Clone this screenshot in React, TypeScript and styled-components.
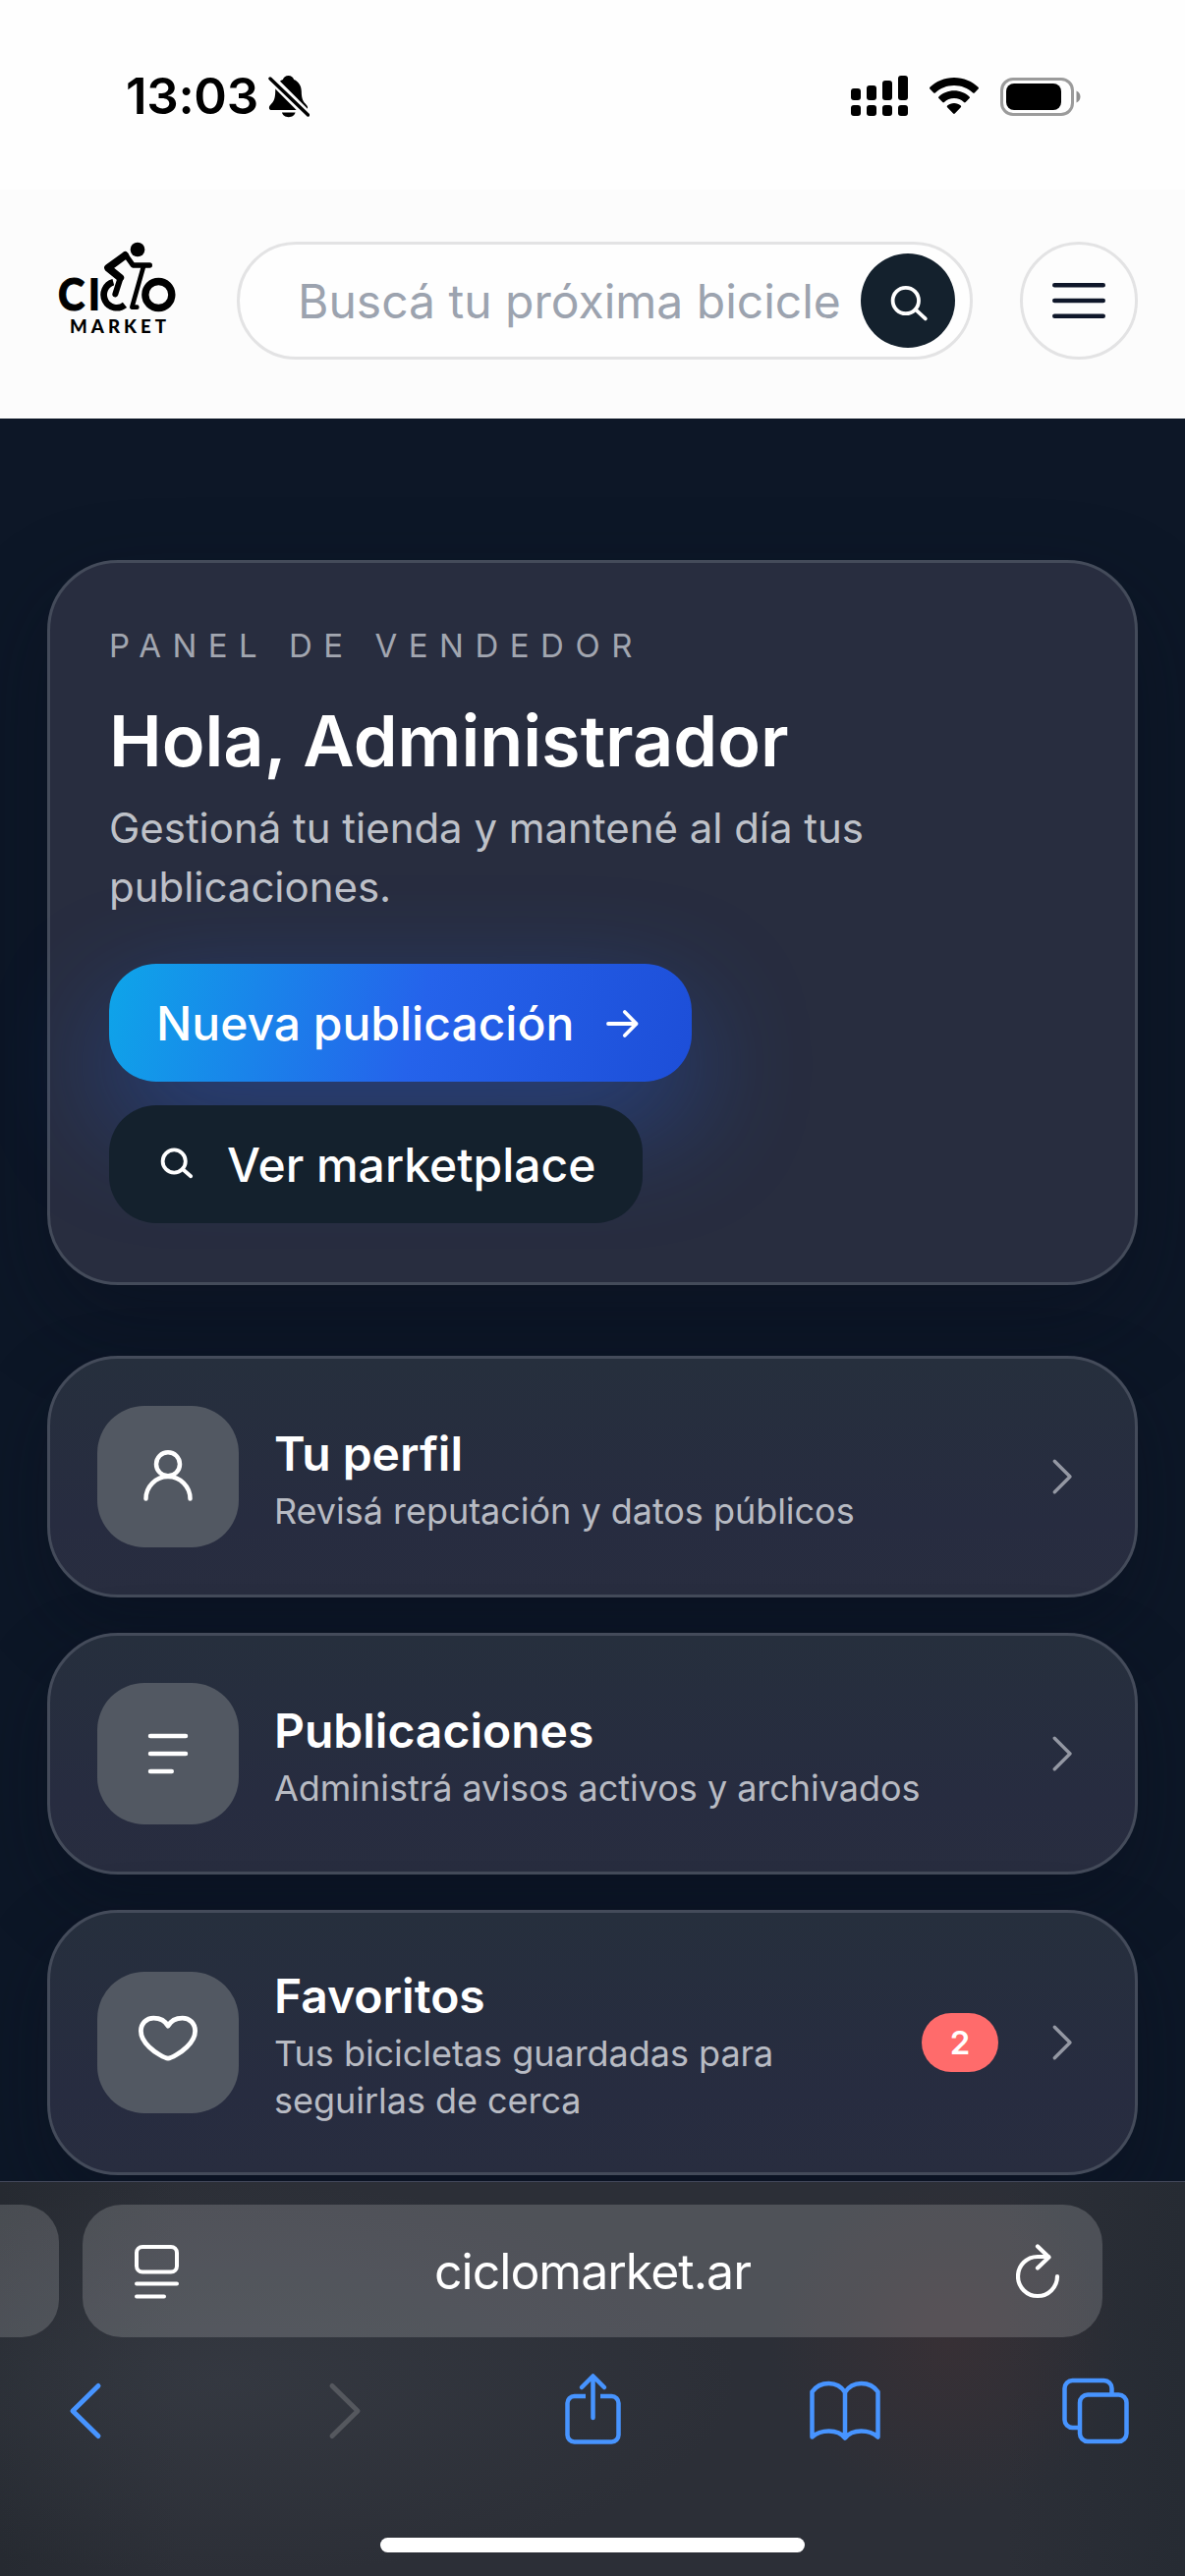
import React from 'react';
import styled, { createGlobalStyle } from 'styled-components';

const GlobalStyle = createGlobalStyle`
  *, *::before, *::after { box-sizing: border-box; }
  html, body { margin: 0; padding: 0; background: #0c1626; }
  body { font-family: Inter, "Liberation Sans", sans-serif; -webkit-font-smoothing: antialiased; }
  svg { display: block; flex: none; }
  button { font: inherit; border: 0; padding: 0; margin: 0; }
  h1, h2, p { margin: 0; }
`;

const Screen = styled.div`
  width: 1206px;
  height: 2622px;
  display: flex;
  flex-direction: column;
  overflow: hidden;
  background: #0d1727;
`;

/* ---------- Status bar ---------- */

const StatusBar = styled.div`
  height: 193px;
  flex: none;
  display: flex;
  justify-content: space-between;
  align-items: flex-start;
  padding: 67px 106px 0 128px;
  background: #fefefe;
  color: #000;
`;

const Clock = styled.div`
  display: flex;
  align-items: center;
  height: 62px;
  gap: 10px;
`;

const Time = styled.span`
  font-size: 51px;
  font-weight: 600;
  line-height: 62px;
  letter-spacing: -0.3px;
`;

const StatusIcons = styled.div`
  display: flex;
  align-items: center;
  height: 62px;
  gap: 22px;
`;

/* ---------- Site header ---------- */

const Header = styled.header`
  height: 233px;
  flex: none;
  display: flex;
  align-items: center;
  gap: 48px;
  padding: 0 48px 7px 40px;
  background: #fcfcfc;
`;

const SearchField = styled.div`
  flex: 1;
  min-width: 0;
  height: 120px;
  display: flex;
  align-items: center;
  justify-content: space-between;
  padding: 0 15px 0 59px;
  border: 3px solid #e3e3e4;
  border-radius: 60px;
  background: #fefefe;
`;

const Placeholder = styled.span`
  padding-top: 1px;
  font-size: 48px;
  line-height: 72px;
  color: #9ca3af;
  white-space: nowrap;
`;

const RoundButton = styled.button<{ $size: number; $outlined?: boolean }>`
  flex: none;
  width: ${(p) => p.$size}px;
  height: ${(p) => p.$size}px;
  display: flex;
  align-items: center;
  justify-content: center;
  border-radius: 50%;
  border: ${(p) => (p.$outlined ? '3px solid #e3e3e4' : '0')};
  background: ${(p) => (p.$outlined ? '#fdfdfd' : '#14212d')};
  color: ${(p) => (p.$outlined ? '#0f172a' : '#fff')};
`;

/* ---------- Page content ---------- */

const Content = styled.main`
  flex: 1;
  min-height: 0;
  overflow: hidden;
  display: flex;
  flex-direction: column;
  gap: 72px;
  padding: 144px 48px 0;
`;

const HeroCard = styled.section`
  flex: none;
  display: flex;
  flex-direction: column;
  align-items: flex-start;
  padding: 60px;
  border: 3px solid #444b5a;
  border-radius: 72px;
  background: #282d3f;
  box-shadow: 0 36px 90px rgba(10, 14, 30, 0.4);
`;

const Kicker = styled.p`
  font-size: 33px;
  line-height: 48px;
  letter-spacing: 11.5px;
  text-transform: uppercase;
  color: #a2a6b0;
`;

const Greeting = styled.h1`
  margin-top: 25px;
  font-size: 72px;
  line-height: 96px;
  font-weight: 600;
  color: #fff;
`;

const Intro = styled.p`
  margin-top: 11px;
  font-size: 42px;
  line-height: 60px;
  letter-spacing: -0.03px;
  color: #bec1c8;
`;

const Actions = styled.div`
  margin-top: 48px;
  display: flex;
  flex-direction: column;
  align-items: flex-start;
  gap: 24px;
`;

const ActionButton = styled.button<{ $primary?: boolean }>`
  height: 120px;
  display: flex;
  align-items: center;
  gap: 24px;
  padding: 1px 48px 0;
  border-radius: 48px;
  font-size: 48px;
  font-weight: 500;
  line-height: 72px;
  white-space: nowrap;
  color: #fff;
  background: ${(p) =>
    p.$primary ? 'linear-gradient(105deg, #0ea5e9 0%, #2563eb 53%, #1d4ed8 100%)' : '#14212d'};
  box-shadow: ${(p) => (p.$primary ? '0 42px 120px rgba(37, 99, 235, 0.4)' : 'none')};
`;

const MenuList = styled.nav`
  display: flex;
  flex-direction: column;
  gap: 36px;
`;

const MenuCard = styled.a`
  flex: none;
  display: flex;
  align-items: center;
  gap: 36px;
  padding: 48px;
  border: 3px solid #444b5a;
  border-radius: 72px;
  background: linear-gradient(180deg, #262f3d, #272c40 70%, #282d3f);
  box-shadow: 0 30px 72px rgba(10, 14, 30, 0.35);
`;

const IconTile = styled.span`
  flex: none;
  width: 144px;
  height: 144px;
  display: flex;
  align-items: center;
  justify-content: center;
  border-radius: 48px;
  background: #525862;
  color: #fff;
`;

const MenuText = styled.div`
  flex: 1;
  min-width: 0;
`;

const MenuTitle = styled.h2`
  padding-top: 1px;
  font-size: 48px;
  line-height: 71px;
  font-weight: 600;
  color: #fff;
`;

const MenuHint = styled.p`
  margin: -1px 0 1px;
  font-size: 36px;
  line-height: 48px;
  letter-spacing: -0.03px;
  color: #b8bbc3;
`;

const Badge = styled.span`
  flex: none;
  width: 78px;
  height: 60px;
  display: flex;
  align-items: center;
  justify-content: center;
  margin-right: 1px;
  border-radius: 30px;
  background: #ff6b6b;
  color: #fff;
  font-size: 33px;
  font-weight: 600;
`;

/* ---------- Browser bar ---------- */

const BrowserBar = styled.footer`
  height: 402px;
  flex: none;
  display: flex;
  flex-direction: column;
  align-items: center;
  border-top: 1px solid #42475a;
  background:
    radial-gradient(ellipse 180px 170px at 965px 165px, rgba(84, 50, 48, 0.28), rgba(84, 50, 48, 0)),
    radial-gradient(ellipse 520px 200px at 230px 200px, rgba(60, 65, 74, 0.5), rgba(60, 65, 74, 0)),
    linear-gradient(90deg, #262a31, #2c2f37 15%, #2c2f37 85%, #262b33);
`;

const Tabs = styled.div`
  align-self: stretch;
  display: flex;
  gap: 24px;
  padding: 23px 84px 0 0;
`;

const NeighbourTab = styled.div`
  width: 60px;
  height: 135px;
  border-radius: 0 38px 38px 0;
  background: rgba(255, 255, 255, 0.16);
`;

const AddressBar = styled.div`
  flex: 1;
  height: 135px;
  display: flex;
  align-items: center;
  padding: 0 42px 0 52px;
  border-radius: 40px;
  background: rgba(255, 255, 255, 0.17);
  color: #fff;
`;

const Domain = styled.span`
  flex: 1;
  padding-right: 10px;
  text-align: center;
  font-size: 50px;
  line-height: 64px;
  letter-spacing: -1px;
`;

const Toolbar = styled.div`
  align-self: stretch;
  display: grid;
  grid-template-columns: 264px 243px 250px 257px 70px;
  align-items: center;
  height: 76px;
  margin-top: 36px;
  padding-left: 67px;
  color: #4794ff;
`;

const HomeIndicator = styled.div`
  width: 432px;
  height: 15px;
  margin-top: 92px;
  border-radius: 8px;
  background: #fff;
`;

/* ---------- Drawings ---------- */

type StrokeProps = {
  size: number;
  width?: number;
  color?: string;
  children: React.ReactNode;
};

const StrokeIcon = ({ size, width = 1.5, color = 'currentColor', children }: StrokeProps) => (
  <svg
    width={size}
    height={size}
    viewBox="0 0 24 24"
    fill="none"
    stroke={color}
    strokeWidth={width}
    strokeLinecap="round"
    strokeLinejoin="round"
  >
    {children}
  </svg>
);

const UserIcon = () => (
  <StrokeIcon size={72}>
    <circle cx="12" cy="7.75" r="4" />
    <path d="M4.5 19.5a7.5 7.5 0 0 1 15 0" />
  </StrokeIcon>
);

const ListIcon = () => (
  <StrokeIcon size={72}>
    <path d="M6 6h12M6 12h12M6 18h7.25" />
  </StrokeIcon>
);

const HeartIcon = () => (
  <StrokeIcon size={72} width={1.6}>
    <path d="M12 17.4C11 17.300 7.600 15.500 5.600 13.500C3.700 11.700 2.800 9.900 2.800 8.100C2.800 5.500 4.700 3.700 7.100 3.700C9.300 3.700 11.100 4.700 12 6.400C12.900 4.700 14.700 3.700 16.900 3.700C19.300 3.700 21.200 5.500 21.200 8.100C21.200 9.900 20.300 11.700 18.400 13.500C16.400 15.500 13 17.300 12 17.4Z" />
  </StrokeIcon>
);

const ChevronIcon = () => (
  <StrokeIcon size={54} color="#9498a3">
    <path d="M9 5l7 7-7 7" />
  </StrokeIcon>
);

const FieldSearchIcon = () => (
  <StrokeIcon size={48} width={1.9}>
    <circle cx="10.9" cy="12" r="6.6" />
    <path d="M15.9 16.6l5 4.6" />
  </StrokeIcon>
);

const ButtonSearchIcon = () => (
  <StrokeIcon size={48} width={1.9}>
    <circle cx="9.1" cy="10" r="5.8" />
    <path d="M13.400 14l4.200 3.600" />
  </StrokeIcon>
);

const BellOffIcon = () => (
  <svg width="42" height="44" viewBox="0 0 42 44">
    <path
      d="M20.5 1c-3 0-5 1.7-5.6 4C10 7 7.300 11.500 7.200 17c-.1 6-1 9.500-3.700 12.300C1.500 31.400.9 32.300.9 33.700c0 1.400 1 2.300 2.700 2.300h33.800c1.700 0 2.700-.9 2.700-2.300 0-1.400-.6-2.300-2.600-4.400-2.700-2.800-3.600-6.300-3.700-12.300C33.700 11.500 31 7 26.100 5c-.6-2.300-2.600-4-5.600-4z"
      fill="#000"
    />
    <path d="M14 38.500h13.500c-.5 2.700-3.200 4.700-6.750 4.700s-6.250-2-6.750-4.700z" fill="#000" />
    <path d="M1 2l42 42" stroke="#fefefe" strokeWidth="9" />
    <path d="M2 4l38.500 37" stroke="#000" strokeWidth="3.400" strokeLinecap="round" />
  </svg>
);

const SIGNAL_BARS = [
  { x: 0, top: 13 },
  { x: 16, top: 10 },
  { x: 32, top: 5 },
  { x: 48, top: 0 },
];

const SignalIcon = () => (
  <svg width="58" height="42" viewBox="0 0 58 42">
    {SIGNAL_BARS.map((b) => (
      <g key={b.x}>
        <rect x={b.x} y={b.top} width="10" height={25 - b.top} rx="3" />
        <rect x={b.x} y="30" width="10" height="11" rx="3" />
      </g>
    ))}
  </svg>
);

const WifiIcon = () => (
  <svg width="50" height="38" viewBox="0 0 50 38">
    <path d="M25 0C34.700 0 43.500 3.800 49.600 9.800c.5.500.5 1.200 0 1.700l-3.800 3.900c-.5.500-1.200.5-1.700 0C39 10.600 32.300 7.900 25 7.900S11 10.600 5.900 15.400c-.5.500-1.200.5-1.700 0L.4 11.500c-.5-.5-.5-1.200 0-1.700C6.500 3.800 15.300 0 25 0z" />
    <path d="M25 13.200c6 0 11.500 2.300 15.600 6.200.5.500.5 1.200 0 1.700l-3.900 3.900c-.5.500-1.200.5-1.700 0-2.600-2.400-6.100-3.900-10-3.900s-7.400 1.500-10 3.900c-.5.500-1.200.5-1.700 0l-3.900-3.900c-.5-.5-.5-1.200 0-1.700 4.100-3.900 9.600-6.200 15.600-6.200z" />
    <path d="M25 26c2.600 0 5 1 6.800 2.600.5.500.5 1.200 0 1.700l-6 6.200c-.5.500-1.200.5-1.700 0l-6-6.200c-.5-.5-.5-1.200 0-1.700C20 27 22.400 26 25 26z" />
  </svg>
);

const BatteryIcon = () => (
  <svg width="82" height="39" viewBox="0 0 82 39">
    <rect x="1.500" y="1.500" width="72" height="36" rx="11.500" fill="none" stroke="#9b9b9b" strokeWidth="3" />
    <rect x="6" y="6" width="56" height="27" rx="8" fill="#000" />
    <path d="M77.500 13.500c2.400 1 4 3.300 4 6s-1.600 5-4 6z" fill="#8f8f8f" />
  </svg>
);

const LogoText = styled.text`
  font-family: Lato, Inter, sans-serif;
  font-weight: 900;
`;

/* The second C and the O are the wheels of the bicycle. */
const Logo = () => (
  <svg width="153" height="152" viewBox="0 0 459 456" aria-label="Ciclo Market">
    <g fill="#000">
      <LogoText x="57" y="258" fontSize="137" textLength="82" lengthAdjust="spacingAndGlyphs" stroke="#000" strokeWidth="3">C</LogoText>
      <LogoText x="147" y="258" fontSize="137">I</LogoText>
      <LogoText x="93" y="326" fontSize="56" textLength="294">MARKET</LogoText>
      <circle cx="300" cy="72" r="22" />
    </g>
    <g fill="none" stroke="#000" strokeLinecap="round" strokeLinejoin="round">
      <circle cx="364" cy="210" r="40.500" strokeWidth="22" />
      <path d="M261 241A39.500 39.500 0 1 1 226 172" strokeWidth="20" strokeLinecap="butt" />
      <path d="M248 166L233 208" stroke="#fdfdfd" strokeWidth="28" />
      <path d="M262 90L210 128L247 158" strokeWidth="23" />
      <path d="M248 158L232 208" strokeWidth="18" />
      <path d="M262 86L286 120H337" strokeWidth="16" />
      <path d="M318 124L283 248H298" strokeWidth="14" />
    </g>
  </svg>
);

const ReaderIcon = () => (
  <svg width="46" height="56" viewBox="0 0 46 56" fill="none" stroke="#fff" strokeWidth="4" strokeLinecap="round">
    <rect x="3" y="3" width="41" height="25.500" rx="6" />
    <path d="M3 40.500h41M3 53.500h28" />
  </svg>
);

const ReloadIcon = () => (
  <svg width="46" height="56" viewBox="0 0 46 56" fill="none" stroke="#fff" strokeWidth="4.200" strokeLinecap="round" strokeLinejoin="round">
    <path d="M42 33a20 20 0 1 1-20-20H33" />
    <path d="M22 2.500L33.500 13.500L22 24.500" />
  </svg>
);

const BackIcon = () => (
  <svg width="38" height="76" viewBox="0 0 38 76" fill="none" stroke="currentColor" strokeWidth="5" strokeLinecap="round" strokeLinejoin="round">
    <path d="M33 13.500L7 39L33 64.500" />
  </svg>
);

const ForwardIcon = () => (
  <svg width="38" height="76" viewBox="0 0 38 76" fill="none" stroke="#55585e" strokeWidth="5" strokeLinecap="round" strokeLinejoin="round">
    <path d="M7 13.500L33 39L7 64.500" />
  </svg>
);

const ShareIcon = () => (
  <svg width="58" height="76" viewBox="0 0 58 76" fill="none" stroke="currentColor" strokeWidth="4.500" strokeLinecap="round" strokeLinejoin="round">
    <path d="M22 24H10.500a7 7 0 0 0-7 7v32.500a7 7 0 0 0 7 7h38a7 7 0 0 0 7-7V31a7 7 0 0 0-7-7H37" strokeLinecap="butt" />
    <path d="M29.500 46V4M18 15L29.500 3.500L41 15" />
  </svg>
);

const BookIcon = () => (
  <svg width="72" height="76" viewBox="0 0 72 76" fill="none" stroke="currentColor" strokeWidth="4.500" strokeLinejoin="round" strokeLinecap="round">
    <path d="M36 20C32.500 14.500 26.500 11 19.500 11C12 11 6 14.500 2.500 19.500V65.500C7 61.500 13 59.500 19.500 59.500C26.500 59.500 32.500 62 36 66.500C39.500 62 45.500 59.500 52.500 59.500C59 59.500 65 61.500 69.500 65.500V19.500C66 14.500 60 11 52.500 11C45.500 11 39.500 14.500 36 20ZM36 20V66" />
  </svg>
);

const TabsIcon = () => (
  <svg width="70" height="76" viewBox="0 0 70 76" fill="none" stroke="currentColor" strokeWidth="4.500" strokeLinejoin="round">
    <rect x="18" y="22.500" width="47.500" height="47.500" rx="8" />
    <path d="M50.500 22.500V16a8 8 0 0 0-8-8H10.500a8 8 0 0 0-8 8v32a8 8 0 0 0 8 8H18" />
  </svg>
);

/* ---------- Screen ---------- */

type MenuItem = { title: string; hint: string; icon: React.ReactNode; count?: number };

const MENU: MenuItem[] = [
  { title: 'Tu perfil', hint: 'Revisá reputación y datos públicos', icon: <UserIcon /> },
  { title: 'Publicaciones', hint: 'Administrá avisos activos y archivados', icon: <ListIcon /> },
  { title: 'Favoritos', hint: 'Tus bicicletas guardadas para seguirlas de cerca', icon: <HeartIcon />, count: 2 },
];

export default function App() {
  return (
    <>
      <GlobalStyle />
      <Screen>
        <StatusBar>
          <Clock>
            <Time>13:03</Time>
            <BellOffIcon />
          </Clock>
          <StatusIcons>
            <SignalIcon />
            <WifiIcon />
            <BatteryIcon />
          </StatusIcons>
        </StatusBar>

        <Header>
          <Logo />
          <SearchField>
            <Placeholder>Buscá tu próxima bicicle</Placeholder>
            <RoundButton $size={96} aria-label="Buscar">
              <FieldSearchIcon />
            </RoundButton>
          </SearchField>
          <RoundButton $size={120} $outlined aria-label="Menú">
            <StrokeIcon size={72}>
              <path d="M3.750 6.750h16.500M3.750 12h16.500M3.750 17.250h16.500" />
            </StrokeIcon>
          </RoundButton>
        </Header>

        <Content>
          <HeroCard>
            <Kicker>Panel de vendedor</Kicker>
            <Greeting>Hola, Administrador</Greeting>
            <Intro>
              Gestioná tu tienda y mantené al día tus
              <br />
              publicaciones.
            </Intro>
            <Actions>
              <ActionButton $primary>
                Nueva publicación
                <StrokeIcon size={48} width={1.9}>
                  <path d="M5.500 12h14.300M13.900 6l5.900 6-5.900 6" />
                </StrokeIcon>
              </ActionButton>
              <ActionButton>
                <ButtonSearchIcon />
                Ver marketplace
              </ActionButton>
            </Actions>
          </HeroCard>

          <MenuList>
            {MENU.map((item) => (
              <MenuCard key={item.title}>
                <IconTile>{item.icon}</IconTile>
                <MenuText>
                  <MenuTitle>{item.title}</MenuTitle>
                  <MenuHint>{item.hint}</MenuHint>
                </MenuText>
                {item.count !== undefined && <Badge>{item.count}</Badge>}
                <ChevronIcon />
              </MenuCard>
            ))}
          </MenuList>
        </Content>

        <BrowserBar>
          <Tabs>
            <NeighbourTab />
            <AddressBar>
              <ReaderIcon />
              <Domain>ciclomarket.ar</Domain>
              <ReloadIcon />
            </AddressBar>
          </Tabs>
          <Toolbar>
            <BackIcon />
            <ForwardIcon />
            <ShareIcon />
            <BookIcon />
            <TabsIcon />
          </Toolbar>
          <HomeIndicator />
        </BrowserBar>
      </Screen>
    </>
  );
}
